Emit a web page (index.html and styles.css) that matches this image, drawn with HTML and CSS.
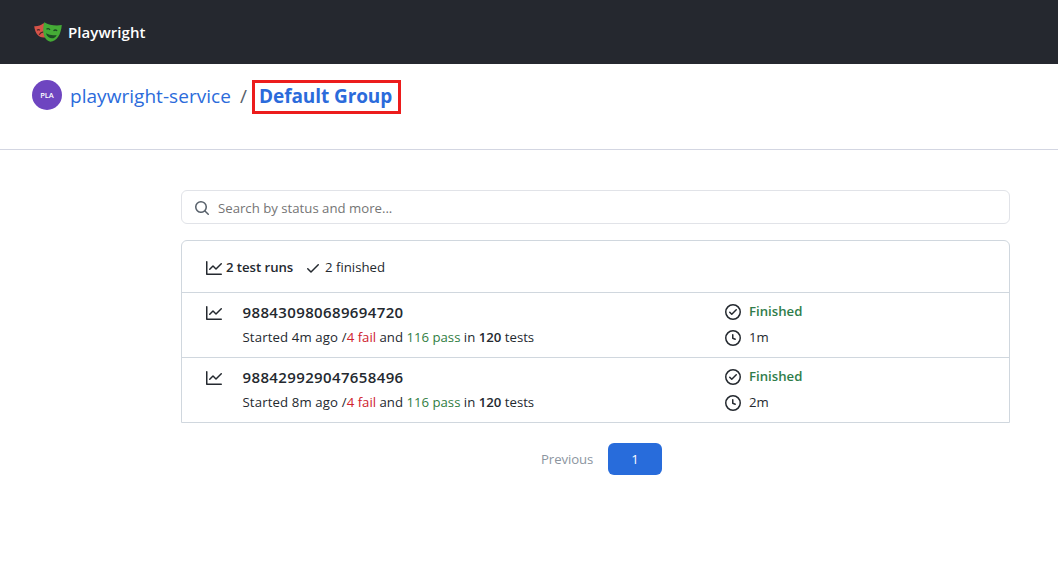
FILE: index.html
```html
<!DOCTYPE html>
<html lang="en">
<head>
<meta charset="utf-8">
<title>Playwright</title>
<link rel="stylesheet" href="styles.css">
</head>
<body>
<svg width="0" height="0" class="defs" aria-hidden="true">
  <symbol id="graph" viewBox="0 0 16 16"><path d="M1.5 1.75V13.5h13.75a.75.75 0 0 1 0 1.5H.75a.75.75 0 0 1-.75-.75V1.75a.75.75 0 0 1 1.5 0Zm14.28 2.53-5.25 5.25a.75.75 0 0 1-1.06 0L7 7.06 4.28 9.78a.75.75 0 0 1-1.06-1.06l3.25-3.25a.75.75 0 0 1 1.06 0L10 7.94l4.72-4.72a.75.75 0 1 1 1.06 1.06Z"/></symbol>
  <symbol id="check" viewBox="0 0 16 16"><path d="M13.78 4.22a.75.75 0 0 1 0 1.06l-7.25 7.25a.75.75 0 0 1-1.06 0L2.22 9.28a.75.75 0 0 1 1.06-1.06L6 10.94l6.72-6.72a.75.75 0 0 1 1.06 0Z"/></symbol>
  <symbol id="done" viewBox="0 0 16 16"><path d="M0 8a8 8 0 1 1 16 0A8 8 0 0 1 0 8Zm1.5 0a6.5 6.5 0 1 0 13 0 6.5 6.5 0 0 0-13 0Zm10.28-1.72-4.5 4.5a.75.75 0 0 1-1.06 0l-2-2a.75.75 0 0 1 1.06-1.06l1.47 1.47 3.97-3.97a.75.75 0 0 1 1.06 1.06Z"/></symbol>
  <symbol id="clock" viewBox="0 0 16 16"><path d="M8 0a8 8 0 1 1 0 16A8 8 0 0 1 8 0ZM1.5 8a6.5 6.5 0 1 0 13 0 6.5 6.5 0 0 0-13 0Zm7-3.25v2.992l2.028.812a.75.75 0 0 1-.557 1.392l-2.5-1A.751.751 0 0 1 7 8.25v-3.5a.75.75 0 0 1 1.5 0Z"/></symbol>
  <symbol id="search" viewBox="0 0 16 16"><path d="M10.68 11.74a6 6 0 0 1-7.922-8.982 6 6 0 0 1 8.982 7.922l3.04 3.04a.749.749 0 0 1-1.06 1.06ZM11.5 7a4.499 4.499 0 1 0-8.997 0A4.499 4.499 0 0 0 11.5 7Z"/></symbol>
</svg>
<header class="topbar">
  <svg class="logo" viewBox="0 0 28 20">
    <path fill="#d65348" d="M.2 4.300C4 4.500 7 3.400 9.500 1.300L12 3v12.300C5.500 16.800 1.300 12.500.2 4.300Z"/>
    <path fill="none" stroke="#4a2428" stroke-width="1.100" d="M3 8.300q1.500-1.200 2.900-.1M5.200 12.800q1.300-2.500 4.300-2.900"/>
    <path fill="#45ab36" d="M10.300.2c4.700 2.900 11.200 4 17.500 2.900C26.900 12.500 23 19.700 16.300 19.800 9.500 18 7.800 9 10.300.2Z"/>
    <path fill="none" stroke="#1d4a24" stroke-width="1.300" d="M12.500 7.300q1.800-1.500 3.500.6M19.500 8.700q2-1.500 3.600.2"/>
    <path fill="#1d4a24" d="M11.900 11.200q5 2.900 10.800 1.700c-2 5.100-9 4.400-10.800-1.700Z"/>
  </svg>
  <span class="brand">Playwright</span>
</header>
<nav class="crumbs">
  <span class="avatar">PLA</span>
  <a class="service">playwright-service</a>
  <span class="slash">/</span>
  <a class="group">Default Group</a>
</nav>
<main class="content">
  <div class="search"><svg class="icon"><use href="#search"/></svg><span class="hint">Search by status and more...</span></div>
  <section class="runs">
    <div class="summary">
      <svg class="icon"><use href="#graph"/></svg><b class="total">2 test runs</b>
      <svg class="icon tick"><use href="#check"/></svg><span class="finished">2 finished</span>
    </div>
    <article class="run">
      <svg class="icon"><use href="#graph"/></svg>
      <div class="details">
        <div class="id">988430980689694720</div>
        <div class="meta"><span class="started">Started 4m ago /</span><span class="fail">4 fail</span> and <span class="pass">116 pass</span> in <b>120</b> tests</div>
      </div>
      <div class="state">
        <div class="line"><svg class="icon"><use href="#done"/></svg><b class="status">Finished</b></div>
        <div class="line"><svg class="icon"><use href="#clock"/></svg><span>1m</span></div>
      </div>
    </article>
    <article class="run">
      <svg class="icon"><use href="#graph"/></svg>
      <div class="details">
        <div class="id">988429929047658496</div>
        <div class="meta"><span class="started">Started 8m ago /</span><span class="fail">4 fail</span> and <span class="pass">116 pass</span> in <b>120</b> tests</div>
      </div>
      <div class="state">
        <div class="line"><svg class="icon"><use href="#done"/></svg><b class="status">Finished</b></div>
        <div class="line"><svg class="icon"><use href="#clock"/></svg><span>2m</span></div>
      </div>
    </article>
  </section>
  <div class="pager"><span class="previous">Previous</span><span class="page">1</span></div>
</main>
</body>
</html>
```
FILE: styles.css
```css
* { box-sizing: border-box; }
body { margin: 0; background: #fff; color: #24292f; font: 13.2px/20px "Open Sans", "Noto Sans", sans-serif; height: 570px; overflow: hidden; white-space: nowrap; }
b { font-weight: 600; }
.defs { position: absolute; }
.icon { width: 16px; height: 16px; fill: currentColor; flex: none; display: block; }
.topbar { height: 64px; background: #25282f; display: flex; align-items: center; padding-left: 34px; }
.logo { width: 28px; height: 20px; }
.brand { color: #fff; font-size: 15px; font-weight: 600; margin-left: 6px; letter-spacing: .08px; }
.crumbs { height: 86px; border-bottom: 1px solid #d3d6e2; display: flex; align-items: flex-start; padding: 16px 0 0 32px; color: #2b6bdb; font-size: 19px; line-height: 32px; }
.avatar { width: 30px; height: 30px; border-radius: 50%; background: #6e45c0; color: #fff; font-size: 7.5px; font-weight: 600; line-height: 30px; text-align: center; }
.service { margin-left: 8px; width: 161px; letter-spacing: .04px; }
.slash { width: 10px; margin-left: 9px; color: #57606a; }
.group { width: 149px; height: 34px; margin-left: 2px; border: 3px solid #ec1c1c; padding-left: 4px; font-weight: 700; line-height: 26px; letter-spacing: -.08px; }
.content { width: 829px; margin: 40px 0 0 181px; }
.search { height: 34px; border: 1px solid #e1e3e8; border-radius: 6px; display: flex; align-items: center; gap: 8px; padding: 2px 0 0 12px; color: #757575; }
.search .icon { color: #57606a; }
.runs { margin-top: 16px; border: 1px solid #d0d7de; border-radius: 6px 6px 0 0; }
.summary { height: 51px; display: flex; align-items: center; padding: 2px 0 0 24px; }
.total { margin-left: 4px; width: 68px; padding-bottom: 2px; letter-spacing: -.05px; }
.tick { margin-left: 11px; }
.finished { margin-left: 4px; padding-bottom: 2px; }
.run { height: 65px; border-top: 1px solid #d0d7de; display: flex; padding-left: 24px; }
.run > .icon { margin-top: 12px; }
.details { margin-left: 20.5px; width: 482.5px; padding-top: 8px; }
.id { font-size: 15px; font-weight: 600; line-height: 22px; letter-spacing: .37px; }
.meta { margin-top: 4px; }
.started { letter-spacing: .13px; }
.fail { color: #cf222e; }
.pass { color: #2f7d3f; }
.state { padding-top: 8px; }
.line { display: flex; gap: 8px; height: 20px; margin-bottom: 6px; }
.line .icon { margin-top: 3px; }
.status { color: #2f7d4a; }
.pager { margin-top: 20px; height: 32px; display: flex; align-items: center; padding-left: 360px; }
.previous { width: 67px; color: #8c959f; letter-spacing: -.08px; }
.page { width: 54px; height: 32px; border-radius: 6px; background: #286cdb; color: #fff; text-align: center; line-height: 32px; }
```
